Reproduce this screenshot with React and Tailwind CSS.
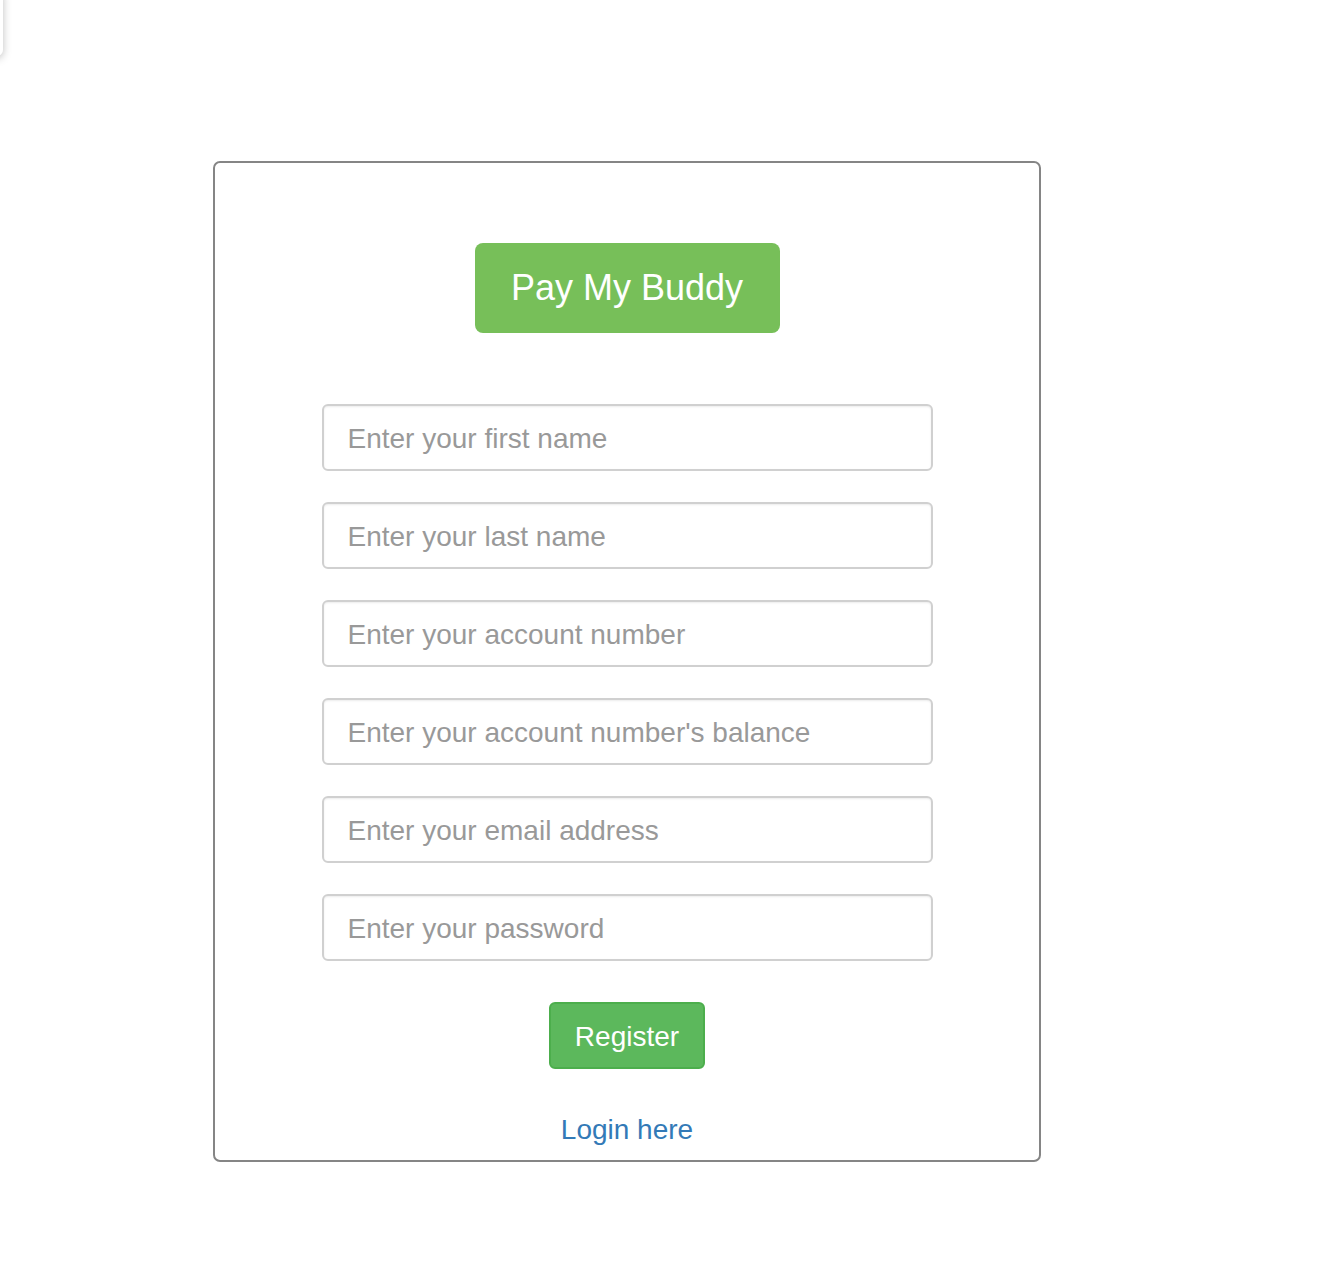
import React from "react";

const fields = [
    "Enter your first name",
    "Enter your last name",
    "Enter your account number",
    "Enter your account number's balance",
    "Enter your email address",
    "Enter your password",
];

export default function App() {
    return (
        <div className="relative min-h-[1270px] bg-white font-['Liberation_Sans',Arial,sans-serif]">
            {/* stray popup peeking at the top-left edge */}
            <div className="absolute -left-[40px] top-[-10px] h-[66px] w-[43px] rounded-md bg-white shadow-[0_2px_8px_rgba(0,0,0,0.25)]" />

            <div className="pt-[161px] pl-[213px]">
                <div className="flex w-[828px] flex-col items-center rounded-[7px] border-2 border-[#858585] pt-[80px] pb-[14px]">
                    <div className="flex h-[90px] w-[305px] items-center justify-center rounded-[8px] bg-[#77bf59] text-[36px] text-white">
                        Pay My Buddy
                    </div>

                    <form className="mt-[71px] flex w-[611px] flex-col gap-[31px]">
                        {fields.map((f) => (
                            <input
                                key={f}
                                type="text"
                                placeholder={f}
                                className="h-[67px] w-full rounded-[6px] border-2 border-[#d0d0d0] px-[24px] pt-[2px] text-[28px] text-[#555] shadow-[inset_0_1px_2px_rgba(0,0,0,0.08)] placeholder:text-[#999] focus:outline-none"
                            />
                        ))}
                    </form>

                    <button className="mt-[41px] h-[67px] w-[156px] rounded-[6px] border-2 border-[#4cae4c] bg-[#5cb85c] pt-[2px] text-[28px] text-white">
                        Register
                    </button>

                    <a href="#" className="mt-[45px] text-[28px] leading-[32px] text-[#337ab7]">
                        Login here
                    </a>
                </div>
            </div>
        </div>
    );
}
